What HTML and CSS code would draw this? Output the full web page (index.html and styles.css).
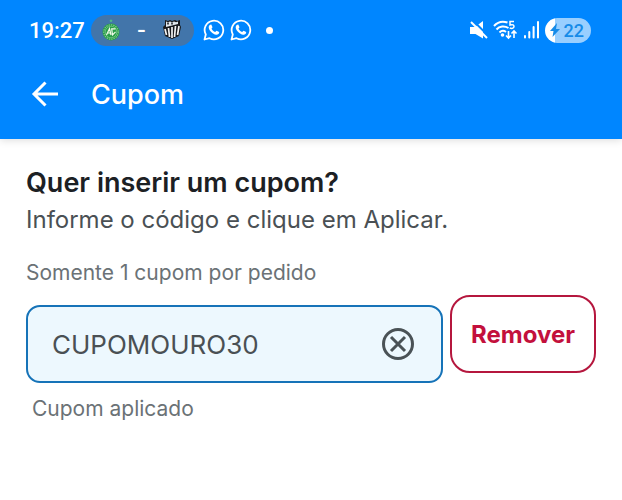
FILE: index.html
```html
<!DOCTYPE html>
<html lang="pt-BR">

<head>
  <meta charset="UTF-8" />
  <meta name="viewport" content="width=device-width, initial-scale=1.0" />
  <title>Cupom</title>
  <link rel="stylesheet" href="styles.css">
</head>

<body>
  <header class="header">
    <div class="status-bar">
      <span class="clock">19:27</span>
      <div class="match">
        <svg width="20" height="22" viewBox="0 0 20 22">
          <path d="M10 0l.6 1.2 1.2.1-.9.8.3 1.2-1.2-.7-1.2.7.3-1.2-.9-.8 1.2-.1z" fill="#4fbf87" />
          <circle cx="10" cy="13" r="8.5" fill="#269b48" />
          <circle cx="10" cy="13" r="7.2" fill="none" stroke="#7fca8d" stroke-width="1.2" stroke-dasharray="1.4 1" />
          <circle cx="10" cy="13" r="5.8" fill="#2a9c4a" stroke="#8fd49b" stroke-width=".6" />
          <path d="M5.500 16l3-6.500L10 16M6.800 14h2.700M14.500 9.800h-3.800L11.500 16l3-3.200" fill="none" stroke="#f1fbe9" stroke-width="1.200" />
        </svg>
        <span class="score">-</span>
        <svg width="20" height="22" viewBox="0 0 20 22">
          <path d="M3 1l3 1 2-1 2 1 3-1 2 1 3-1v5l1 2-2 9-7 3-7-3-2-9 2-2z" fill="#17191d" />
          <path d="M4 2.500l2 .8 2-.8 2 .8 2-.8 2 .8 2-.8V5L4 8z" fill="#dfe5eb" />
          <path d="M5 3.500h2v2H5zM9 3.500h2v2H9z" fill="#45484d" />
          <path d="M3 10l1.500 6M6.500 9l1 9M10 8v11M13.500 7l-1 11M17 7l-1.500 9" stroke="#f3f3f3" stroke-width="1.700" />
        </svg>
      </div>
      <div class="notifications">
        <svg width="22" height="22" viewBox="0 0 22 22">
          <path d="M1.500 20.500l1.300-5A9.300 9.300 0 1 1 6.500 19.200z" fill="none" stroke="#fff" stroke-width="1.800" stroke-linejoin="round" />
          <path d="M7.200 5.700l1.100-.1 1.200 2.700-1 1.400c.8 1.600 2 2.700 3.700 3.400l1.300-1.300 2.700 1.300c.1 1.900-1.500 2.900-3 2.700C9.500 15.300 6.100 11.800 5.700 8.600c-.1-1.300.6-2.500 1.500-2.900z" fill="#fff" />
        </svg>
        <svg width="22" height="22" viewBox="0 0 22 22">
          <path d="M1.500 20.500l1.300-5A9.300 9.300 0 1 1 6.500 19.200z" fill="none" stroke="#fff" stroke-width="1.800" stroke-linejoin="round" />
          <path d="M7.200 5.700l1.100-.1 1.200 2.700-1 1.400c.8 1.600 2 2.700 3.700 3.400l1.300-1.300 2.700 1.300c.1 1.900-1.500 2.900-3 2.700C9.500 15.300 6.100 11.800 5.700 8.600c-.1-1.300.6-2.500 1.500-2.900z" fill="#fff" />
        </svg>
        <span class="dot"></span>
      </div>
      <div class="system">
        <svg width="18" height="20" viewBox="0 0 18 20">
          <path d="M0 7h5l8-6v17.500L5.500 14H0z" fill="#fff" />
          <path d="M2.500 0l15 15" stroke="#0086ff" stroke-width="2" />
          <path d="M1 2l16 16" stroke="#fff" stroke-width="2" />
        </svg>
        <svg width="25" height="20" viewBox="0 0 25 20">
          <path d="M1 6C5 1.500 10 1 14.500 2.500M3.500 9.500c3-3.500 8-4 12-1.500M6.500 12.500c2-2 4.500-2 6.500-.5" fill="none" stroke="#fff" stroke-width="2" />
          <circle cx="9.500" cy="15" r="1.800" fill="#fff" />
          <path d="M21 1.500h-4V5c3-1 4 .3 4 1.600 0 1.800-2.500 2.400-4.200 1.300" fill="none" stroke="#fff" stroke-width="1.500" />
          <path d="M15.500 11v7M13 15.500l2.500 2.500 2.500-2.500M21 18v-7M18.500 13.500L21 11l2.500 2.500" fill="none" stroke="#fff" stroke-width="1.600" />
        </svg>
        <svg width="17" height="20" viewBox="0 0 17 20">
          <path d="M2 16v1.500M6.300 12v5.500M10.600 7v10.500M15 2v15.500" stroke="#fff" stroke-width="2" stroke-linecap="round" />
        </svg>
        <div class="battery">
          <svg width="12" height="16" viewBox="0 0 12 16">
            <path d="M8 1L1 9h3.500L3.500 15 11 7H7z" fill="#168be8" />
          </svg>
          <span class="level">22</span>
        </div>
      </div>
    </div>
    <div class="title-bar">
      <button class="back" type="button" aria-label="Voltar">
        <svg width="28" height="28" viewBox="0 0 28 28">
          <path d="M14.500 2.500L3 14l11.500 11.500M3 14h24" fill="none" stroke="#fff" stroke-width="3" />
        </svg>
      </button>
      <h1>Cupom</h1>
    </div>
  </header>

  <main class="content">
    <h2>Quer inserir um cupom?</h2>
    <p class="intro">Informe o código e clique em Aplicar.</p>

    <form class="coupon-form">
      <label for="cupom">Somente 1 cupom por pedido</label>
      <div class="row">
        <div class="field">
          <input type="text" id="cupom" value="CUPOMOURO30" aria-describedby="aviso">
          <button class="clear" type="button" aria-label="Limpar">
            <svg width="34" height="34" viewBox="0 0 34 34" fill="none" stroke="#4a5256" stroke-width="3">
              <circle cx="17" cy="17" r="14.500" />
              <path d="M10 10l14 14M24 10L10 24" />
            </svg>
          </button>
        </div>
        <button class="remove" type="button">Remover</button>
      </div>
      <p class="message" id="aviso">Cupom aplicado</p>
    </form>
  </main>
</body>

</html>
```
FILE: styles.css
```css
* {
  box-sizing: border-box;
  margin: 0;
  padding: 0;
  font-family: Inter, sans-serif;
}

body {
  background: #fff;
  color: #1c2024;
}

svg {
  display: block;
  flex-shrink: 0;
}

button {
  background: none;
  border: none;
  cursor: pointer;
}

.header {
  background: #0086ff;
  color: #fff;
  padding-bottom: 19px;
  box-shadow: 0 1px 8px rgba(0, 0, 0, 0.15);
}

.status-bar {
  display: flex;
  align-items: center;
  height: 60px;
  padding: 0 31px 0 29px;
}

.clock {
  font-family: Roboto, sans-serif;
  font-size: 22px;
  font-weight: 500;
}

.match {
  display: flex;
  align-items: center;
  justify-content: space-between;
  width: 103px;
  height: 31px;
  margin-left: 6px;
  padding: 0 12px 0 10px;
  border-radius: 16px;
  background: #4275aa;
}

.score {
  font-size: 20px;
  font-weight: 600;
}

.notifications {
  display: flex;
  align-items: center;
  gap: 5px;
  margin-left: 9px;
}

.dot {
  width: 7px;
  height: 7px;
  margin-left: 9px;
  border-radius: 50%;
  background: #fff;
}

.system {
  display: flex;
  align-items: center;
  gap: 5px;
  margin-left: auto;
}

.battery {
  display: flex;
  align-items: center;
  justify-content: space-between;
  width: 46px;
  height: 25px;
  padding: 0 7px 0 4px;
  border-radius: 13px;
  background: linear-gradient(to right, #fff 22%, #99cfff 22%);
  color: #168be8;
}

.level {
  font-family: Roboto, sans-serif;
  font-size: 18px;
  font-weight: 500;
}

.title-bar {
  display: flex;
  align-items: center;
  gap: 32px;
  height: 60px;
  padding: 8px 31px 0;
}

h1 {
  font-size: 27px;
  font-weight: 500;
}

.content {
  padding: 26px;
}

h2 {
  font-size: 27px;
  font-weight: 600;
  line-height: 36px;
}

.intro {
  color: #4a5054;
  font-size: 24px;
  line-height: 38px;
}

.coupon-form {
  margin-top: 18px;
}

label {
  display: block;
  color: #6b7276;
  font-size: 21px;
  line-height: 32px;
}

.row {
  display: flex;
  align-items: flex-start;
  gap: 7px;
  margin-top: 6px;
}

.field {
  display: flex;
  flex: 1;
  align-items: center;
  min-width: 0;
  height: 78px;
  margin-top: 10px;
  padding: 0 26px 0 24px;
  border: 2px solid #1673b8;
  border-radius: 14px;
  background: #edf8fe;
}

input {
  flex: 1;
  min-width: 0;
  border: none;
  outline: none;
  background: none;
  color: #4a5054;
  font-size: 26px;
}

.remove {
  height: 78px;
  padding: 0 19px;
  border: 2px solid #b5173e;
  border-radius: 20px;
  color: #c3103c;
  font-size: 24px;
  font-weight: 700;
}

.message {
  margin-top: 10px;
  padding-left: 6px;
  color: #6b7276;
  font-size: 21px;
  line-height: 32px;
}
```
